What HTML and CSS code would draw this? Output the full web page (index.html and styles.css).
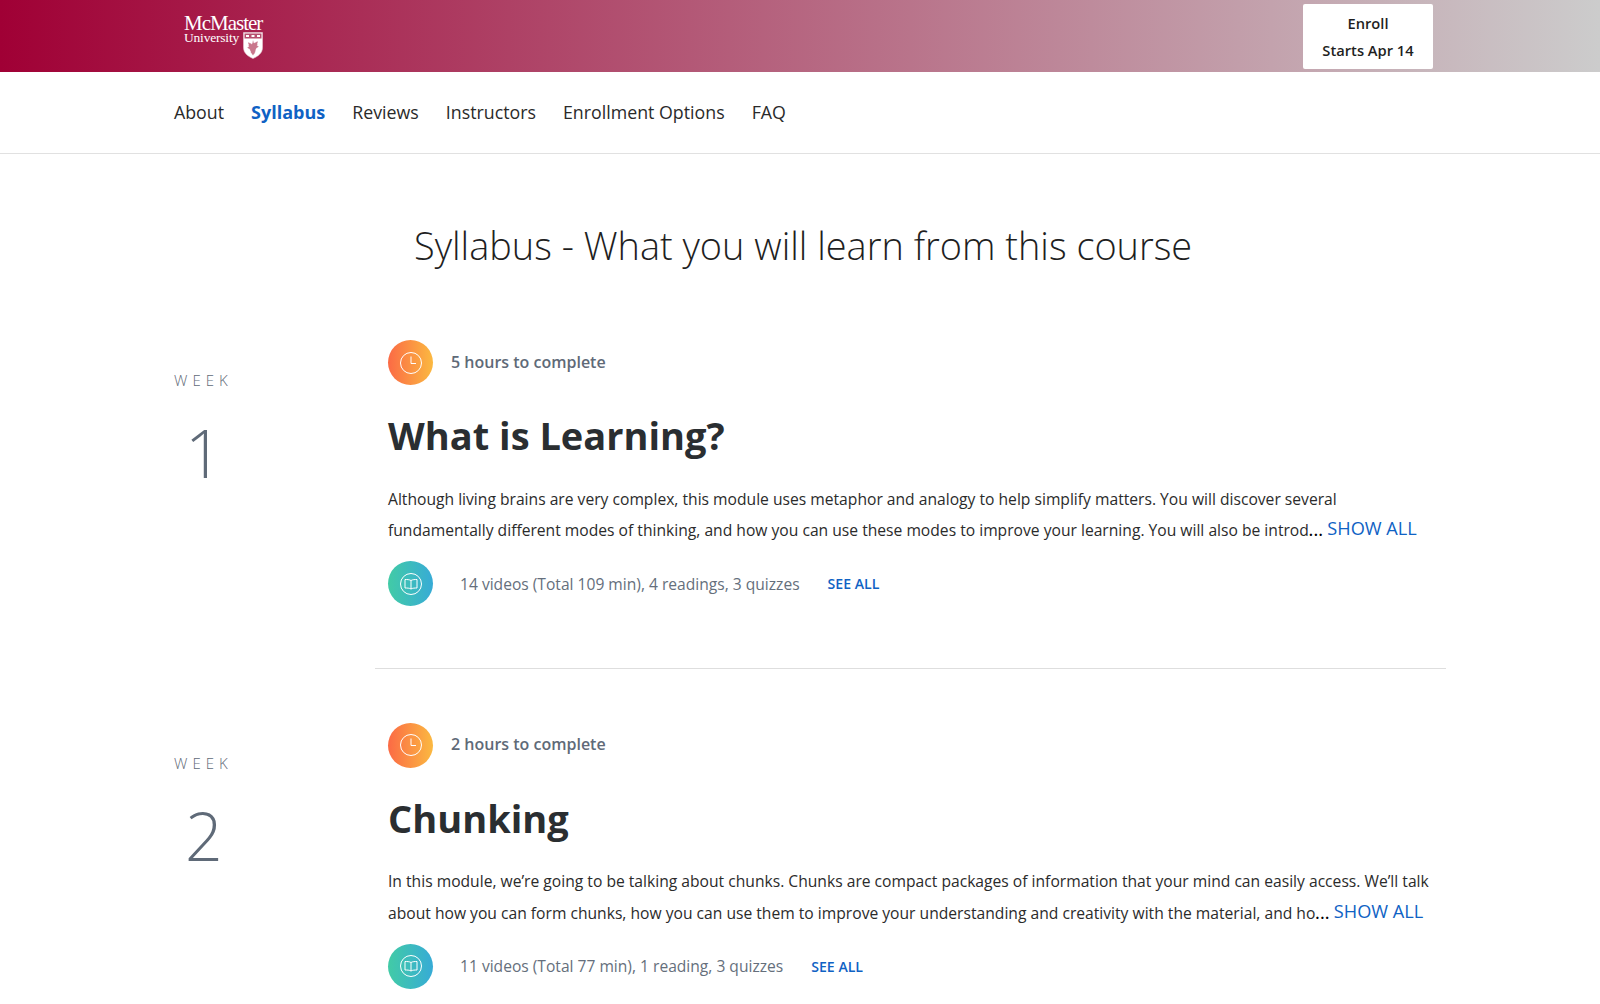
FILE: index.html
```html
<!DOCTYPE html>
<html lang="en">
<head>
<meta charset="utf-8">
<title>Syllabus</title>
<link rel="stylesheet" href="styles.css">
</head>
<body>
<header class="banner">
  <div class="logo">
    <div class="logo-name">McMaster</div>
    <div class="logo-row">
      <span class="logo-uni">University</span>
      <svg class="shield" width="20" height="27" viewBox="0 0 20 27"><path d="M.5.5h19v15c0 6-5 9-9.500 11C5.500 24.500.5 21.500.5 15.500z" fill="#fff" stroke="#e8c9d2" stroke-width=".6"/><path d="M1.500 1.500h17v5h-17z" fill="#b7506f"/><path d="M3 3h3v2H3zM8.500 3h3v2h-3zM14 3h3v2h-3z" fill="#fff"/><path d="M10 8l1 3 4-2-.8 4.500 1.800 1-2.800 2-1.200 4.500-2 2.500-2-2.500L6.800 17.500 4 15.500l1.800-1L5 10l4 2z" fill="#c9778c" stroke="#fff" stroke-width=".5" stroke-dasharray="1.500 .8"/></svg>
    </div>
  </div>
  <a class="enroll"><span>Enroll</span><span>Starts Apr 14</span></a>
</header>
<nav class="tabs">
  <a>About</a><a class="active">Syllabus</a><a>Reviews</a><a>Instructors</a><a>Enrollment Options</a><a>FAQ</a>
</nav>
<main>
  <h1 class="page-title">Syllabus - What you will learn from this course</h1>

  <section class="week">
    <div class="week-label"><div class="week-word">WEEK</div><div class="week-num">1</div></div>
    <div class="week-body">
      <div class="meta">
        <span class="badge badge-time"><svg width="24" height="24" viewBox="0 0 24 24" fill="none" stroke="#fff" stroke-width="1"><circle cx="12" cy="12" r="10.500"/><path d="M12 5.500V12.500H17"/></svg></span>
        <span class="hours">5 hours to complete</span>
      </div>
      <h2 class="module">What is Learning?</h2>
      <p class="desc">Although living brains are very complex, this module uses metaphor and analogy to help simplify matters. You will discover several fundamentally different modes of thinking, and how you can use these modes to improve your learning. You will also be introd<span class="dots">...</span> <a class="show">SHOW ALL</a></p>
      <div class="items">
        <span class="badge badge-book"><svg width="24" height="24" viewBox="0 0 24 24" fill="none" stroke="#fff" stroke-width="1"><circle cx="12" cy="12" r="10.500"/><path d="M12 8.500C10.500 7.500 8 7.500 6 7.500V16C8 16 10.500 16 12 17C13.500 16 16 16 18 16V7.500C16 7.500 13.500 7.500 12 8.500ZM12 8.500V17"/></svg></span>
        <span class="counts">14 videos (Total 109 min), 4 readings, 3 quizzes</span>
        <a class="see">SEE ALL</a>
      </div>
    </div>
  </section>

  <hr class="divider">

  <section class="week">
    <div class="week-label"><div class="week-word">WEEK</div><div class="week-num">2</div></div>
    <div class="week-body">
      <div class="meta">
        <span class="badge badge-time"><svg width="24" height="24" viewBox="0 0 24 24" fill="none" stroke="#fff" stroke-width="1"><circle cx="12" cy="12" r="10.500"/><path d="M12 5.500V12.500H17"/></svg></span>
        <span class="hours">2 hours to complete</span>
      </div>
      <h2 class="module">Chunking</h2>
      <p class="desc">In this module, we’re going to be talking about chunks. Chunks are compact packages of information that your mind can easily access. We’ll talk about how you can form chunks, how you can use them to improve your understanding and creativity with the material, and ho<span class="dots">...</span> <a class="show">SHOW ALL</a></p>
      <div class="items">
        <span class="badge badge-book"><svg width="24" height="24" viewBox="0 0 24 24" fill="none" stroke="#fff" stroke-width="1"><circle cx="12" cy="12" r="10.500"/><path d="M12 8.500C10.500 7.500 8 7.500 6 7.500V16C8 16 10.500 16 12 17C13.500 16 16 16 18 16V7.500C16 7.500 13.500 7.500 12 8.500ZM12 8.500V17"/></svg></span>
        <span class="counts">11 videos (Total 77 min), 1 reading, 3 quizzes</span>
        <a class="see">SEE ALL</a>
      </div>
    </div>
  </section>
</main>
</body>
</html>
```
FILE: styles.css
```css
* { box-sizing: border-box; }
html, body { margin: 0; height: 1004px; overflow: hidden; }
body { font-family: "Open Sans", sans-serif; color: #1f1f1f; background: #fff; }
.banner {
  height: 72px;
  display: flex;
  justify-content: space-between;
  padding: 4px 167px 0 184px;
  background: linear-gradient(90deg, #a00035 0%, #cccccc 100%);
}
.logo { color: #fff; font-family: "Liberation Serif", serif; padding-top: 9px; width: 80px; }
.logo-name { font-size: 21px; line-height: 21px; letter-spacing: -1px; }
.logo-row { display: flex; justify-content: space-between; align-items: flex-start; margin-top: -3px; }
.logo-uni { font-size: 13.500px; line-height: 13px; letter-spacing: -0.2px; }
.shield { margin-top: 1px; margin-right: 1px; }
.enroll {
  width: 130px;
  height: 65px;
  background: #fff;
  border-radius: 2px;
  display: flex;
  flex-direction: column;
  align-items: center;
  justify-content: center;
  font-size: 14.700px;
  font-weight: 600;
  line-height: 27px;
  color: #1f1f1f;
}
.tabs {
  height: 82px;
  display: flex;
  align-items: center;
  gap: 27px;
  padding: 0 0 1px 174px;
  border-bottom: 1px solid #e1e1e1;
  font-size: 17.800px;
  color: #2a2a2a;
}
.tabs .active { color: #0f62c4; font-weight: 700; font-size: 18px; }
main { padding-left: 174px; }
.page-title {
  margin: 0;
  padding: 60px 0 0 240px;
  height: 186px;
  font-size: 37.900px;
  line-height: 62px;
  font-weight: 300;
  color: #1f1f1f;
}
.week { display: flex; }
.week-label { width: 214px; padding-top: 29px; color: #5f6a78; }
.week-word { font-size: 15px; line-height: 22px; letter-spacing: 5px; font-weight: 300; }
.week-num { font-size: 66px; line-height: 80px; font-weight: 300; margin-top: 21px; padding-left: 11px; }
.week-body { width: 1072px; }
.meta { display: flex; align-items: center; gap: 18px; height: 45px; }
.badge { width: 45px; height: 45px; border-radius: 50%; display: flex; align-items: center; justify-content: center; flex: none; }
.badge-time { background: linear-gradient(90deg, #fb6a45, #fbb941); }
.badge-book { background: linear-gradient(90deg, #42cba6, #37abd6); }
.hours { font-size: 16px; line-height: 22px; font-weight: 600; color: #5f6a78; padding-bottom: 2px; }
.module { margin: 25px 0 0; font-size: 38px; line-height: 50px; font-weight: 700; color: #2a2e31; }
.desc { margin: 24.500px 0 0; width: 1050px; font-size: 15.650px; line-height: 29.600px; color: #2b2b2b; }
.dots { color: #000; font-weight: 600; letter-spacing: 0.5px; }
.show { font-size: 18.200px; color: #0f62c4; vertical-align: 1px; }
.items { display: flex; align-items: center; height: 45px; margin-top: 15.500px; }
.counts { margin-left: 27px; font-size: 15.600px; color: #656f7c; }
.see { margin-left: 28px; font-size: 14.100px; font-weight: 600; color: #0f62c4; }
.divider { margin: 62px 0 53.500px 201px; width: 1071px; height: 1px; border: 0; background: #dedede; }
```
